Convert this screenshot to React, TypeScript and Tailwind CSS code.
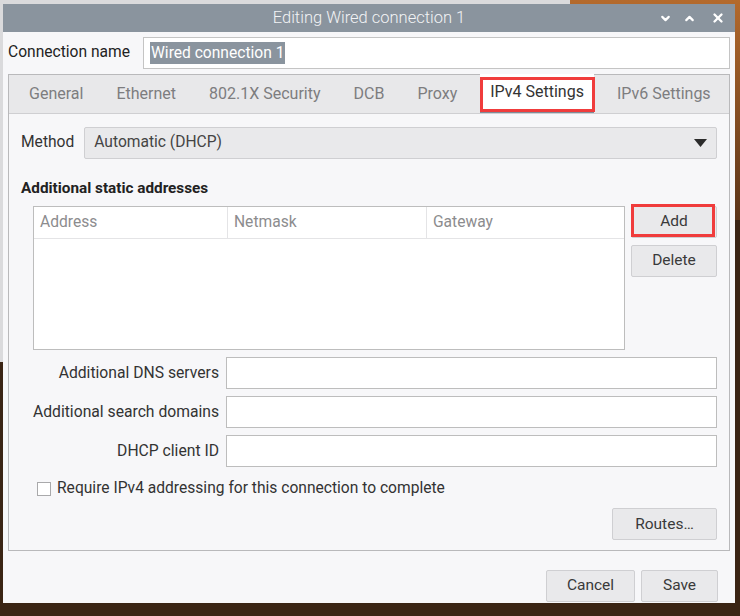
import { ChevronDown, ChevronUp, X } from 'lucide-react';

const font = { fontFamily: 'Roboto, "Noto Sans", sans-serif' };

const tabs = ['General', 'Ethernet', '802.1X Security', 'DCB', 'Proxy', 'IPv4 Settings', 'IPv6 Settings'];

function Btn({ label, className = '' }: { label: string; className?: string }) {
  return (
    <div className={`h-[32px] flex items-center justify-center bg-[#e9e9eb] border border-[#cfcfd2] rounded-[2px] text-[15.5px] text-[#3a3a3a] ${className}`}>
      {label}
    </div>
  );
}

function Field({ label }: { label: string }) {
  return (
    <div className="flex items-center gap-[7px]">
      <div className="w-[186px] text-right text-[15.7px] text-[#333] whitespace-nowrap">{label}</div>
      <div className="flex-1 h-[32px] bg-white border border-[#bdbdbd]" />
    </div>
  );
}

export default function App() {
  return (
    <div className="relative w-[740px] h-[616px] overflow-hidden bg-[#3a2414]" style={font}>
      {/* desktop behind the dialog */}
      <div className="absolute left-0 top-0 w-[575px] h-[362px] bg-[#dadadc]" />
      <div className="absolute right-0 top-0 w-[170px] h-[220px] bg-gradient-to-b from-[#b46a2c] to-[#5b3418]" />

      <div className="relative ml-[3px] mt-[4px] w-[732px] h-[599px] bg-[#f7f7f9] flex flex-col">
        {/* title bar */}
        <div className="relative h-[28px] bg-[#8a949e] flex items-center justify-center pt-[1px]">
          <span className="text-[16.5px] text-[#f2f3f5] font-light">Editing Wired connection 1</span>
          <div className="absolute right-[10px] top-0 h-full flex items-center gap-[11px] text-white">
            <ChevronDown size={13} strokeWidth={4} />
            <ChevronUp size={13} strokeWidth={4} />
            <X size={14} strokeWidth={4} className="ml-[4px]" />
          </div>
        </div>

        <div className="px-[5px] pt-[4px] flex-1 flex flex-col">
          {/* connection name */}
          <div className="flex items-center h-[32px] pt-[1px]">
            <div className="w-[135px] text-[15.6px] text-[#222]">Connection name</div>
            <div className="flex-1 h-[32px] bg-white border border-[#c4c4c4] flex items-center pl-[6px]">
              <span className="bg-[#8a949e] text-white text-[15.6px] leading-[22px] px-[1px]">Wired connection 1</span>
            </div>
          </div>

          {/* tab frame */}
          <div className="mt-[6px] border border-[#b9b9bb] flex flex-col h-[477px]">
            <div className="h-[39px] bg-[#e8e8ea] border-b border-[#cfcfd2] flex items-end pl-[10px] gap-[13px]">
              {tabs.map(t =>
                t === 'IPv4 Settings' ? (
                  <div key={t} className="relative h-[39px] px-[10px] bg-white flex items-center text-[16px] text-[#333] border-b-[3px] border-[#7f8b98]">
                    {t}
                    <div className="absolute left-0 right-[-1px] top-[3px] bottom-[-2px] border-[3px] border-[#f03c3c]" />
                  </div>
                ) : (
                  <div key={t} className="h-[39px] px-[10px] flex items-center text-[16px] text-[#7d7d7f]">{t}</div>
                )
              )}
            </div>

            <div className="flex-1 px-[12px] pt-[12px] flex flex-col">
              <div className="flex items-center gap-[10px] h-[32px] pt-[1px]">
                <span className="text-[15.6px] text-[#333]">Method</span>
                <div className="flex-1 h-[32px] bg-[#e9e9eb] border border-[#cfcfd2] rounded-[2px] flex items-center px-[9px] justify-between">
                  <span className="text-[15.6px] text-[#444]">Automatic (DHCP)</span>
                  <svg width="13" height="8" viewBox="0 0 13 8"><path d="M0 0h13L6.5 8z" fill="#2b2b2b" /></svg>
                </div>
              </div>

              <div className="mt-[20px] text-[15.3px] font-bold text-[#222] leading-[20px]">Additional static addresses</div>

              <div className="mt-[8px] ml-[12px] flex gap-[6px]">
                <div className="w-[592px] h-[144px] bg-white border border-[#bdbdbd]">
                  <div className="h-[32px] flex border-b border-[#e4e4e6] text-[15.6px] text-[#8c8c8e]">
                    <div className="w-[194px] border-r border-[#e4e4e6] flex items-center pl-[6px]">Address</div>
                    <div className="w-[199px] border-r border-[#e4e4e6] flex items-center pl-[6px]">Netmask</div>
                    <div className="flex-1 flex items-center pl-[6px]">Gateway</div>
                  </div>
                </div>
                <div className="flex-1 flex flex-col gap-[7px]">
                  <div className="relative">
                    <Btn label="Add" />
                    <div className="absolute left-0 right-[2px] top-[-2px] bottom-[1px] border-[3px] border-[#f03c3c]" />
                  </div>
                  <Btn label="Delete" />
                </div>
              </div>

              <div className="mt-[7px] ml-[12px] flex flex-col gap-[7px]">
                <Field label="Additional DNS servers" />
                <Field label="Additional search domains" />
                <Field label="DHCP client ID" />
              </div>

              <div className="mt-[10px] ml-[16px] flex items-center gap-[6px]">
                <div className="w-[14px] h-[14px] bg-white border border-[#a9a9ab]" />
                <span className="text-[15.6px] text-[#333]">Require IPv4 addressing for this connection to complete</span>
              </div>

              <div className="mt-[8px] flex justify-end">
                <Btn label="Routes…" className="w-[105px]" />
              </div>
            </div>
          </div>

          {/* dialog buttons */}
          <div className="mt-[19px] flex justify-end gap-[6px] pr-[12px]">
            <Btn label="Cancel" className="w-[89px]" />
            <Btn label="Save" className="w-[77px]" />
          </div>
        </div>
      </div>
    </div>
  );
}
